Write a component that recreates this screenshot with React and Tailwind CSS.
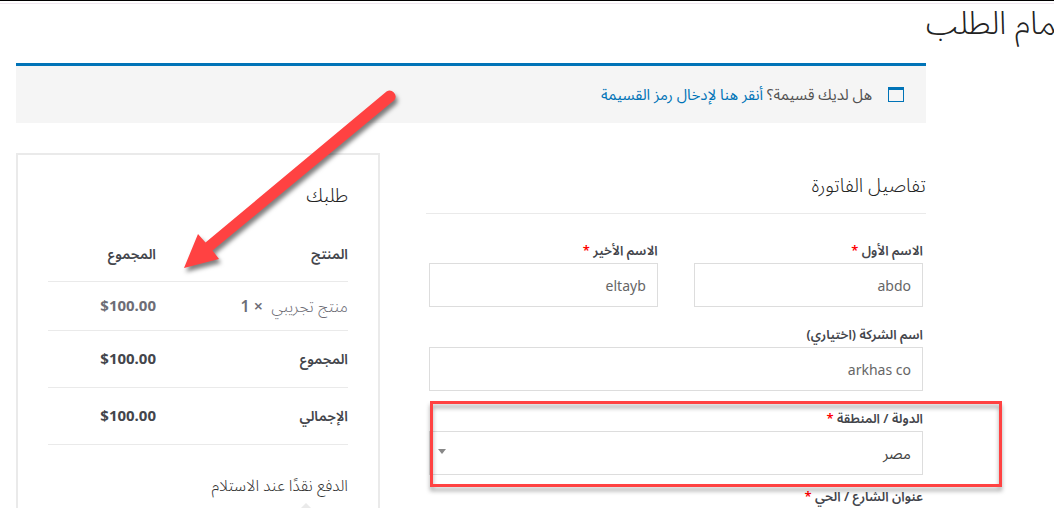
import { useState } from 'react'

const orderRows = [
  { label: 'المجموع', value: '$100.00' },
  { label: 'الإجمالي', value: '$100.00' },
]

function Required() {
  return <span className="text-[#ff0000]">*</span>
}

function Label({ htmlFor, required, children }) {
  return (
    <label htmlFor={htmlFor} className="block h-6 text-[13px] leading-[22px] font-semibold text-[#43454b] whitespace-nowrap">
      {children} {required && <Required />}
    </label>
  )
}

function TextField({ id, label, value, required }) {
  const [text, setText] = useState(value)

  return (
    <div className="min-w-0 flex-1">
      <Label htmlFor={id} required={required}>{label}</Label>
      <input
        id={id}
        type="text"
        value={text}
        onChange={(e) => setText(e.target.value)}
        className="block h-11 w-full border border-[#dddddd] bg-white px-[11px] text-sm text-[#666666] outline-none"
      />
    </div>
  )
}

function CountryField() {
  return (
    <div className="relative mb-[10px]">
      <Label htmlFor="country" required>الدولة / المنطقة</Label>
      <div className="relative">
        <select
          id="country"
          defaultValue="EG"
          className="block h-11 w-full appearance-none border border-[#dddddd] bg-white px-[11px] text-[15px] text-[#444444] outline-none"
        >
          <option value="EG">مصر</option>
        </select>
        <svg className="pointer-events-none absolute top-[18px] left-[9px] h-[5px] w-2" viewBox="0 0 8 5">
          <path d="M0 0h8L4 5z" fill="#888888" />
        </svg>
      </div>
      {/* Highlight frame */}
      <div className="pointer-events-none absolute -top-[6px] -right-[79px] -bottom-3 left-px border-[3px] border-[#ff4242] drop-shadow-[0_4px_2px_rgba(0,0,0,0.35)]" />
    </div>
  )
}

function CouponNotice() {
  return (
    <div className="flex h-[60px] items-center gap-4 border-t-[3px] border-[#0073b7] bg-[#f5f5f5] px-[22px] text-[15px] text-[#515151]">
      <svg className="h-[15px] w-4" viewBox="0 0 16 15">
        <path d="M0 0h16v15H0zM1 3v11h14V3z" fill="#0073b7" fillRule="evenodd" />
      </svg>
      <p>
        هل لديك قسيمة؟{' '}
        <a href="#coupon" className="text-[#0073b7]">أنقر هنا لإدخال رمز القسيمة</a>
      </p>
    </div>
  )
}

function BillingForm() {
  return (
    <form className="w-[55%]">
      <h2 className="border-b border-[#eaeaea] pt-3 pb-2 text-[19px] leading-10 font-light text-[#222222]">تفاصيل الفاتورة</h2>
      <div className="flex flex-col gap-4 px-[3px] pt-[25px]">
        <div className="flex gap-9">
          <TextField id="first-name" label="الاسم الأول" value="abdo" required />
          <TextField id="last-name" label="الاسم الأخير" value="eltayb" required />
        </div>
        <TextField id="company" label="اسم الشركة (اختياري)" value="arkhas co" />
        <CountryField />
      </div>
      <div className="px-[3px]">
        <Label htmlFor="street" required>عنوان الشارع / الحي</Label>
        <input id="street" type="text" className="block h-11 w-full border border-[#dddddd] bg-white px-[11px] text-sm outline-none" />
      </div>
    </form>
  )
}

function OrderReview() {
  return (
    <section className="w-[40%] border-2 border-[#eaeaea] px-[30px] pt-5">
      <h2 className="text-[19px] leading-10 font-light text-[#222222]">طلبك</h2>
      <table className="mt-1 w-full table-fixed text-[15px] text-[#43454b]">
        <thead>
          <tr className="h-[62px] border-b border-[#eaeaea]">
            <th className="w-[64%] pt-2 text-start text-sm font-semibold">المنتج</th>
            <th className="pt-2 text-start text-sm font-semibold">المجموع</th>
          </tr>
        </thead>
        <tbody>
          <tr className="h-[49px] border-b border-[#eaeaea] text-[#6d6d76]">
            <td className="text-base font-light">منتج تجريبي&nbsp; <strong className="font-semibold">× 1</strong></td>
            <td className="font-bold"><bdi dir="ltr">$100.00</bdi></td>
          </tr>
          {orderRows.map((row) => (
            <tr key={row.label} className="h-[57px] border-b border-[#eaeaea]">
              <th className="text-start text-sm font-semibold">{row.label}</th>
              <td className="font-bold"><bdi dir="ltr">{row.value}</bdi></td>
            </tr>
          ))}
        </tbody>
      </table>
      <div className="pt-7 text-base font-light text-[#333333]">
        <p className="leading-6">الدفع نقدًا عند الاستلام</p>
        <div className="mt-[6px] mr-9 h-0 w-0 border-x-[6px] border-b-[6px] border-x-transparent border-b-[#eaeaea]" />
        <div className="h-16 bg-[#eaeaea]" />
      </div>
    </section>
  )
}

function Arrow() {
  return (
    <svg className="pointer-events-none absolute top-[20px] left-[160px] h-[200px] w-[240px] overflow-visible" viewBox="176 83 240 200">
      <path
        d="M184 268L198 234L205.500 242.500L386.500 91.500A6 6 0 0 1 394.500 100L212.500 250.500L219 259Z"
        fill="#ff4242"
        className="drop-shadow-[2px_4px_2px_rgba(0,0,0,0.5)]"
      />
    </svg>
  )
}

export default function App() {
  return (
    <div
      dir="rtl"
      className="h-screen overflow-hidden border-t border-black bg-white font-['Noto_Sans','Noto_Sans_Arabic','DejaVu_Sans',sans-serif]"
    >
      <div className="mt-[2px] border-t border-[#f0e8f0]" />
      <header className="h-[59px]">
        <h1 className="-mr-5 text-[32px] leading-9 font-light text-[#222222]">إتمام الطلب</h1>
      </header>
      <main className="relative mr-32 ml-4">
        <CouponNotice />
        <div className="flex items-start justify-between pt-[30px]">
          <BillingForm />
          <OrderReview />
        </div>
        <Arrow />
      </main>
    </div>
  )
}
